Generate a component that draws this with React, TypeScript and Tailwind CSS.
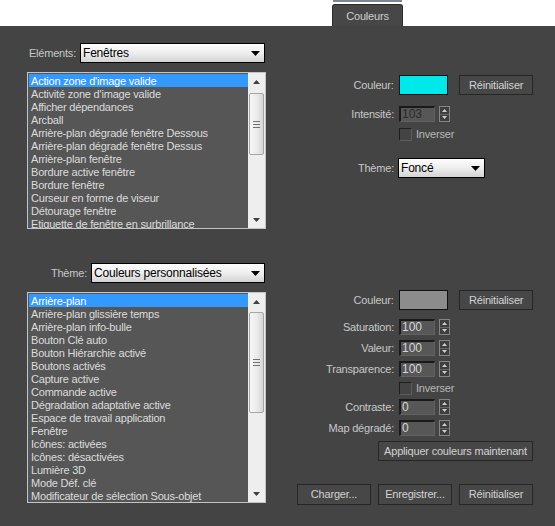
import React from "react";

const list1 = [
  "Action zone d'image valide",
  "Activité zone d'image valide",
  "Afficher dépendances",
  "Arcball",
  "Arrière-plan dégradé fenêtre Dessous",
  "Arrière-plan dégradé fenêtre Dessus",
  "Arrière-plan fenêtre",
  "Bordure active fenêtre",
  "Bordure fenêtre",
  "Curseur en forme de viseur",
  "Détourage fenêtre",
  "Etiquette de fenêtre en surbrillance",
];

const list2 = [
  "Arrière-plan",
  "Arrière-plan glissière temps",
  "Arrière-plan info-bulle",
  "Bouton Clé auto",
  "Bouton Hiérarchie activé",
  "Boutons activés",
  "Capture active",
  "Commande active",
  "Dégradation adaptative active",
  "Espace de travail application",
  "Fenêtre",
  "Icônes: activées",
  "Icônes: désactivées",
  "Lumière 3D",
  "Mode Déf. clé",
  "Modificateur de sélection Sous-objet",
];

function DropArrow() {
  return (
    <svg width="9" height="5" viewBox="0 0 9 5" className="shrink-0">
      <path d="M0 0H9L4.5 5Z" fill="#000" />
    </svg>
  );
}

function Dropdown({ value, className }: { value: string; className: string }) {
  return (
    <div
      className={`h-[20px] border border-black bg-gradient-to-b from-[#fdfdfd] via-[#eeeeee] to-[#d3d3d3] flex items-center justify-between pl-[2px] pr-[4px] text-black text-[12px] tracking-[-0.2px] ${className}`}
    >
      <span className="leading-[18px]">{value}</span>
      <DropArrow />
    </div>
  );
}

function ScrollArrow({ up }: { up: boolean }) {
  return (
    <div className="h-[17px] flex items-center justify-center shrink-0">
      <svg width="7" height="4" viewBox="0 0 7 4">
        {up ? <path d="M0 4H7L3.5 0Z" fill="#404040" /> : <path d="M0 0H7L3.5 4Z" fill="#404040" />}
      </svg>
    </div>
  );
}

function Thumb({ className }: { className: string }) {
  return (
    <div
      className={`mx-[1px] rounded-[2px] border border-[#a6a6a6] bg-gradient-to-r from-[#f6f6f6] via-[#ececec] to-[#d6d6d6] flex flex-col items-center justify-center gap-[2px] ${className}`}
    >
      <div className="w-[7px] h-[1px] bg-[#707070]" />
      <div className="w-[7px] h-[1px] bg-[#707070]" />
      <div className="w-[7px] h-[1px] bg-[#707070]" />
    </div>
  );
}

function ListBox({
  items,
  className,
  thumbClass,
}: {
  items: string[];
  className: string;
  thumbClass: string;
}) {
  return (
    <div className={`w-[239px] border border-[#c4c4c4] bg-[#565656] flex ${className}`}>
      <div className="flex-1 overflow-hidden pl-[1px] pt-[1px]">
        {items.map((t, i) => (
          <div
            key={t}
            className={`h-[13px] leading-[14px] pl-[2px] whitespace-nowrap text-[11px] tracking-[-0.2px] ${
              i === 0 ? "bg-[#3399ff] text-white" : "text-[#dcdcdc]"
            }`}
          >
            {t}
          </div>
        ))}
      </div>
      <div className="w-[17px] bg-[#eeeeee] flex flex-col">
        <ScrollArrow up={true} />
        <div className="flex-1">
          <Thumb className={thumbClass} />
        </div>
        <ScrollArrow up={false} />
      </div>
    </div>
  );
}

function Label({ text }: { text: string }) {
  return (
    <div className="w-[97px] text-right text-[11px] tracking-[-0.2px] text-[#c8c8c8] whitespace-nowrap">{text}</div>
  );
}

function Button({ text, className }: { text: string; className: string }) {
  return (
    <div
      className={`border border-[#262626] bg-[#474747] text-[#d2d2d2] text-[11px] tracking-[-0.2px] flex items-center justify-center whitespace-nowrap ${className}`}
    >
      {text}
    </div>
  );
}

function Spin() {
  return (
    <div className="ml-[4px] w-[11px] h-[16px] border border-[#858585] bg-[#3e3e3e] flex flex-col">
      <div className="flex-1 flex items-center justify-center border-b border-[#666666]">
        <svg width="5" height="3" viewBox="0 0 5 3">
          <path d="M0 3H5L2.5 0Z" fill="#cfcfcf" />
        </svg>
      </div>
      <div className="flex-1 flex items-center justify-center">
        <svg width="5" height="3" viewBox="0 0 5 3">
          <path d="M0 0H5L2.5 3Z" fill="#cfcfcf" />
        </svg>
      </div>
    </div>
  );
}

function NumRow({ label, value, dim, className }: { label: string; value: string; dim?: boolean; className: string }) {
  return (
    <div className={`flex items-center h-[16px] ${className}`}>
      <Label text={label} />
      <div
        className={`ml-[5px] w-[36px] h-[16px] bg-[#575757] border-t-2 border-l-2 border-r border-b border-t-[#1a1a1a] border-l-[#1a1a1a] border-r-[#626262] border-b-[#626262] pl-[1px] text-[12px] leading-[13px] ${
          dim ? "text-[#2a2a2a]" : "text-[#d6d6d6]"
        }`}
      >
        {value}
      </div>
      <Spin />
    </div>
  );
}

function CheckRow({ className }: { className: string }) {
  return (
    <div className={`flex items-center h-[13px] ${className}`}>
      <div className="w-[97px]" />
      <div className="ml-[5px] w-[13px] h-[13px] bg-[#444444] border border-t-[#1e1e1e] border-l-[#1e1e1e] border-r-[#5c5c5c] border-b-[#5c5c5c]" />
      <div className="ml-[4px] text-[11px] tracking-[-0.2px] text-[#b8b8b8]">Inverser</div>
    </div>
  );
}

function ColorRow({ color, className }: { color: string; className: string }) {
  return (
    <div className={`flex items-center ${className}`}>
      <Label text="Couleur:" />
      <div className={`ml-[5px] w-[50px] h-[20px] border border-[#111111] ${color}`} />
      <Button text="Réinitialiser" className="ml-[11px] w-[74px] h-[20px]" />
    </div>
  );
}

export default function App() {
  return (
    <div className="w-[555px] h-[526px] bg-white flex flex-col font-['Liberation_Sans',Arial,sans-serif]">
      <div className="h-[26px] shrink-0 flex pl-[332px]">
        <div className="w-[71px] flex flex-col">
          <div className="h-[2px] mx-[1px] bg-[#7f8793]" />
          <div className="flex-1 mt-[2px] rounded-t-[3px] border border-b-0 border-[#2c2c2c] bg-[#474747] flex items-center justify-center text-[11px] tracking-[-0.2px] text-[#cfcfcf] pt-[1px]">
            Couleurs
          </div>
        </div>
      </div>
      <div className="flex-1 bg-[#444444] pl-[27px] pt-[17px]">
        {/* Section 1 */}
        <div className="flex">
          <div className="w-[239px] flex flex-col">
            <div className="flex items-center justify-end h-[20px] pr-[1px]">
              <div className="text-[11px] tracking-[-0.2px] text-[#c8c8c8] mr-[4px]">Eléments:</div>
              <Dropdown value="Fenêtres" className="w-[185px]" />
            </div>
            <ListBox items={list1} className="mt-[9px] h-[157px]" thumbClass="mt-[3px] h-[62px]" />
          </div>
          <div className="ml-[31px] w-[236px] pt-[32px] flex flex-col">
            <ColorRow color="bg-[#00e9ea]" className="h-[20px]" />
            <NumRow label="Intensité:" value="103" dim className="mt-[11px]" />
            <CheckRow className="mt-[6px]" />
            <div className="flex items-center mt-[17px] h-[20px]">
              <Label text="Thème:" />
              <Dropdown value="Foncé" className="ml-[4px] w-[87px]" />
            </div>
          </div>
        </div>
        {/* Section 2 */}
        <div className="flex mt-[34px]">
          <div className="w-[239px] flex flex-col">
            <div className="flex items-center justify-end h-[20px] pr-[1px]">
              <div className="text-[11px] tracking-[-0.2px] text-[#c8c8c8] mr-[4px]">Thème:</div>
              <Dropdown value="Couleurs personnalisées" className="w-[174px]" />
            </div>
            <ListBox items={list2} className="mt-[9px] h-[211px]" thumbClass="mt-[2px] h-[101px]" />
          </div>
          <div className="ml-[31px] w-[236px] pt-[27px] flex flex-col">
            <ColorRow color="bg-[#8c8c8c]" className="h-[20px]" />
            <NumRow label="Saturation:" value="100" className="mt-[9px]" />
            <NumRow label="Valeur:" value="100" className="mt-[5px]" />
            <NumRow label="Transparence:" value="100" className="mt-[5px]" />
            <CheckRow className="mt-[5px]" />
            <NumRow label="Contraste:" value="0" className="mt-[4px]" />
            <NumRow label="Map dégradé:" value="0" className="mt-[5px]" />
            <Button text="Appliquer couleurs maintenant" className="mt-[5px] ml-[81px] w-[155px] h-[20px]" />
            <div className="flex gap-[7px] mt-[23px]">
              <Button text="Charger..." className="w-[74px] h-[21px]" />
              <Button text="Enregistrer..." className="w-[74px] h-[21px]" />
              <Button text="Réinitialiser" className="w-[74px] h-[21px]" />
            </div>
          </div>
        </div>
      </div>
    </div>
  );
}
